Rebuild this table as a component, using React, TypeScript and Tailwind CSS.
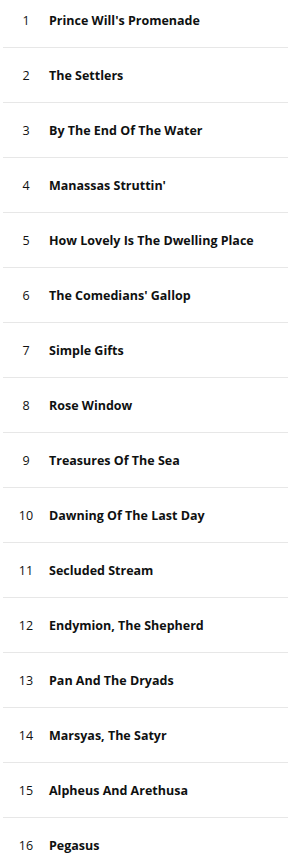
const tracks = [
  "Prince Will's Promenade",
  "The Settlers",
  "By The End Of The Water",
  "Manassas Struttin'",
  "How Lovely Is The Dwelling Place",
  "The Comedians' Gallop",
  "Simple Gifts",
  "Rose Window",
  "Treasures Of The Sea",
  "Dawning Of The Last Day",
  "Secluded Stream",
  "Endymion, The Shepherd",
  "Pan And The Dryads",
  "Marsyas, The Satyr",
  "Alpheus And Arethusa",
  "Pegasus",
];

export default function App() {
  return (
    <div className="w-[288px] h-[864px] overflow-hidden bg-white" style={{ fontFamily: '"Open Sans", "Noto Sans", sans-serif' }}>
      <ol className="-mt-[7px] pl-[3px]">
        {tracks.map((title, i) => (
          <li key={title} className="flex items-center h-[55px] pt-[2px] border-b border-[#e7e7e7] text-[#0f1111]">
            <span className="w-[46px] text-center text-[12.5px]">{i + 1}</span>
            <span className="text-[12.5px] font-bold">{title}</span>
          </li>
        ))}
      </ol>
    </div>
  );
}
